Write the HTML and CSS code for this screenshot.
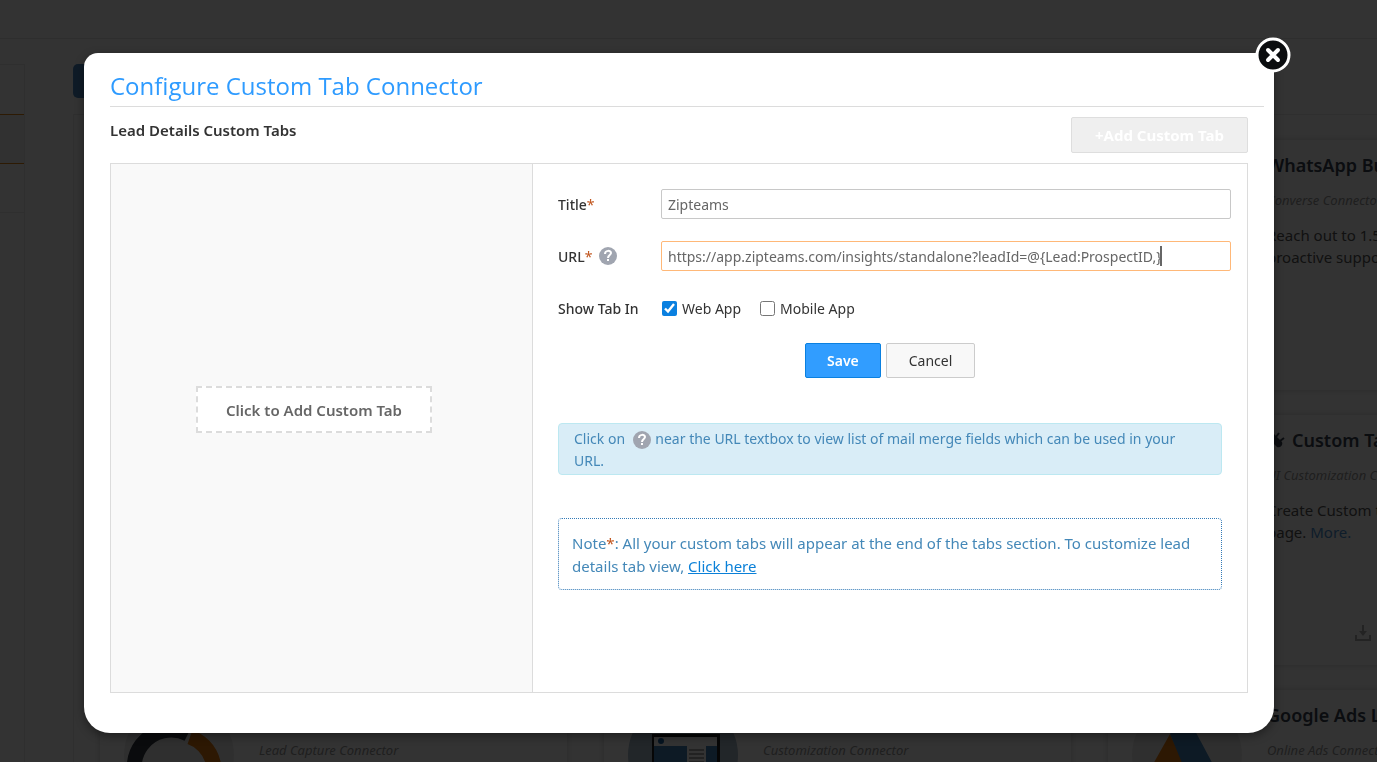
FILE: index.html
```html
<!DOCTYPE html>
<html lang="en">
<head>
    <meta charset="UTF-8" />
    <meta name="viewport" content="width=device-width, initial-scale=1.0" />
    <title>Configure Custom Tab Connector</title>
    <link rel="stylesheet" href="styles.css">
</head>
<body>

<div class="page">
    <header class="topbar"></header>
    <div class="layout">
        <nav class="sidebar">
            <div class="side-item"></div>
            <div class="side-item active"></div>
            <div class="side-item last"></div>
        </nav>
        <main class="content">
            <div class="tab-pill"></div>
            <section class="cards">
                <article class="card"></article>
                <article class="card"></article>
                <article class="card">
                    <div class="card-icon"></div>
                    <div class="card-text">
                        <h3>WhatsApp Business</h3>
                        <p class="kind">Converse Connector</p>
                        <p class="desc">Reach out to 1.5 billion users<br>proactive support.</p>
                    </div>
                </article>

                <article class="card"></article>
                <article class="card"></article>
                <article class="card">
                    <div class="card-icon"></div>
                    <div class="card-text">
                        <h3>
                            <svg class="plug" viewBox="0 0 18 18"><path d="M2 8l8 8c4 1 6-2 5-5L7 3z" fill="#38424f"/><path d="M9 6l3-4M13 10l4-3M5 13l-4 4" stroke="#38424f" stroke-width="2"/></svg>
                            Custom Tab
                        </h3>
                        <p class="kind">UI Customization Connector</p>
                        <p class="desc">Create Custom tabs on lead details<br>page. <a href="#">More.</a></p>
                        <svg class="download" viewBox="0 0 16 16"><path d="M1 10v5h14v-5M8 0v8" fill="none" stroke="#b0b0b0" stroke-width="2"/><path d="M4 6h8l-4 5z" fill="#b0b0b0"/></svg>
                    </div>
                </article>

                <article class="card">
                    <svg class="card-icon" viewBox="0 0 110 110">
                        <path d="M20 92A37 37 0 0 1 64 34" fill="none" stroke="#333a42" stroke-width="15"/>
                        <path d="M66 37A36 36 0 0 1 80 96" fill="none" stroke="#e07810" stroke-width="15"/>
                    </svg>
                    <div class="card-text">
                        <h3>Lead Capture</h3>
                        <p class="kind">Lead Capture Connector</p>
                    </div>
                </article>
                <article class="card">
                    <svg class="card-icon blue" viewBox="0 0 110 110">
                        <rect x="24" y="34" width="68" height="50" fill="#222"/>
                        <rect x="26" y="37" width="63" height="9" fill="#fff"/>
                        <circle cx="33" cy="41" r="3" fill="#1d5f9f"/>
                        <rect x="26" y="46" width="63" height="34" fill="#4080b8"/>
                        <rect x="59" y="46" width="19" height="34" fill="#fff"/>
                        <path d="M61 50h15M61 54h15M61 58h15M61 62h15" stroke="#aaa" stroke-width="2"/>
                    </svg>
                    <div class="card-text">
                        <h3>Customization</h3>
                        <p class="kind">Customization Connector</p>
                    </div>
                </article>
                <article class="card">
                    <svg class="card-icon" viewBox="0 0 110 110">
                        <path d="M38 34L20 66a15 15 0 0 0 26 15L53 66z" fill="#e07810"/>
                        <path d="M38 34L44 25h16L84 70a15 15 0 0 1-26 12z" fill="#4080b8"/>
                    </svg>
                    <div class="card-text">
                        <h3>Google Ads Lead</h3>
                        <p class="kind">Online Ads Connector</p>
                    </div>
                </article>
            </section>
        </main>
    </div>
</div>

<div class="overlay"></div>

<div class="modal" role="dialog" aria-labelledby="modalTitle">
    <button class="close" type="button" aria-label="Close">
        <svg viewBox="0 0 36 36">
            <circle cx="18" cy="18" r="16" fill="#0b0d0f" stroke="#fff" stroke-width="3"/>
            <path d="M13 13l10 10M23 13L13 23" stroke="#fff" stroke-width="4" stroke-linecap="round"/>
        </svg>
    </button>

    <h1 id="modalTitle">Configure Custom Tab Connector</h1>

    <div class="modal-body">
        <div class="toolbar">
            <h2>Lead Details Custom Tabs</h2>
            <button class="btn add" type="button" disabled>+Add Custom Tab</button>
        </div>

        <div class="panel">
            <div class="tab-list">
                <button class="add-tab" type="button">Click to Add Custom Tab</button>
            </div>

            <form class="tab-form" onsubmit="event.preventDefault();">
                <div class="row">
                    <label class="name" for="title">Title<span class="req">*</span></label>
                    <div class="field"><input type="text" id="title" value="Zipteams" /></div>
                </div>
                <div class="row">
                    <label class="name" for="url">URL<span class="req">*</span>
                        <svg class="help" viewBox="0 0 20 20"><circle cx="10" cy="10" r="9" fill="#a0a5b0"/><path d="M7 8c0-4 6-4 6-1 0 2-3 2-3 5M10 13v2" fill="none" stroke="#fff" stroke-width="2"/></svg>
                    </label>
                    <div class="field focused"><input type="text" id="url" value="https://app.zipteams.com/insights/standalone?leadId=@{Lead:ProspectID,}" /><span class="caret"></span></div>
                </div>
                <div class="row">
                    <span class="name">Show Tab In</span>
                    <div class="checks">
                        <input type="checkbox" id="web" checked /><label for="web">Web App</label>
                        <input type="checkbox" id="mobile" /><label for="mobile">Mobile App</label>
                    </div>
                </div>
                <div class="actions">
                    <button class="btn save" type="submit">Save</button>
                    <button class="btn cancel" type="button">Cancel</button>
                </div>

                <p class="info">Click on <svg class="help" viewBox="0 0 20 20"><circle cx="10" cy="10" r="9" fill="#a0a5b0"/><path d="M7 8c0-4 6-4 6-1 0 2-3 2-3 5M10 13v2" fill="none" stroke="#fff" stroke-width="2"/></svg> near the URL textbox to view list of mail merge fields which can be used in your URL.</p>

                <p class="note">Note<span class="req">*</span>: All your custom tabs will appear at the end of the tabs section. To customize lead details tab view, <a href="#">Click here</a></p>
            </form>
        </div>
    </div>
</div>

</body>
</html>
```
FILE: styles.css
```css
* { box-sizing: border-box; }
body {
    margin: 0; height: 100vh; overflow: hidden; background: #fff; color: #333;
    font-family: 'Noto Sans', 'Open Sans', sans-serif; font-size: 14px;
}
h1, h2, h3, p { margin: 0; }
button, input { font: inherit; color: inherit; }

/* page behind the dialog */
.page { height: 100vh; overflow: hidden; }
.topbar { height: 39px; border-bottom: 1px solid #e4e4e4; }
.layout { display: flex; gap: 48px; padding-top: 25px; }
.sidebar { flex: 0 0 25px; border: 1px solid #e8e8e8; border-left: 0; }
.side-item { height: 49px; }
.side-item.active {
    height: 50px; background: #f6f6f6;
    border-top: 1px solid #e08010; border-bottom: 1px solid #e08010;
}
.side-item.last { border-bottom: 1px solid #e8e8e8; }
.content { flex: 1; min-width: 0; }
.tab-pill { width: 120px; height: 34px; background: #4a88c0; border-radius: 5px; }
.cards {
    display: grid; grid-template-columns: repeat(3, 467px); gap: 25px 37px;
    margin-top: 16px; padding: 25px 26px; border: 1px solid #e8e8e8; width: 1600px;
}
.card {
    display: flex; gap: 25px; height: 250px; padding: 10px 24px;
    border-radius: 3px; box-shadow: 0 0 7px rgba(0,0,0,.18);
}
.card-icon {
    flex: 0 0 110px; height: 110px; background: #ececec; border-radius: 50%;
}
.card-icon.blue { background: #a8bccc; }
.card-text { flex: 1; display: flex; flex-direction: column; white-space: nowrap; }
.card h3 {
    display: flex; align-items: center; gap: 7px;
    font-size: 18px; line-height: 30px; font-weight: 600; color: #38424f;
}
.plug { width: 18px; height: 18px; }
.kind { margin-top: 10px; font-size: 13px; line-height: 20px; font-style: italic; color: #999; }
.desc { margin-top: 14px; font-size: 15px; line-height: 22px; color: #555; }
.desc a { color: #4a90d0; text-decoration: none; }
.download { width: 16px; height: 16px; margin: 82px 0 0 88px; }

.overlay { position: fixed; inset: 0; background: rgba(0,0,0,.8); }

/* dialog */
.modal {
    position: absolute; top: 53px; left: 84px; right: 103px;
    padding: 16px 10px 40px 26px; background: #fff;
    border-radius: 14px 14px 26px 26px;
    box-shadow: 0 3px 10px rgba(0,0,0,.4);
}
.close {
    position: absolute; top: -16px; right: -17px; width: 36px; height: 36px;
    padding: 0; border: 0; background: none; cursor: pointer;
}
.close svg { display: block; }
.modal h1 {
    padding-bottom: 3px; border-bottom: 1px solid #dcdcdc;
    font-family: 'Open Sans', sans-serif;
    font-size: 24px; line-height: 34px; font-weight: 400; color: #2e9bff;
}
.modal-body { padding: 10px 16px 0 0; }
.toolbar { display: flex; justify-content: space-between; align-items: flex-start; }
.toolbar h2 { font-size: 15px; line-height: 26px; font-weight: 600; }
.btn {
    height: 35px; padding: 0 21px; border: 1px solid #ccc; border-radius: 2px;
    font-size: 14px; cursor: pointer;
}
.btn.add {
    height: 36px; padding: 0 23px; background: #efefef; border-color: #dedede;
    color: #fff; font-size: 15px; font-weight: 700;
}
.btn.save { background: #319dff; border-color: #0a80e0; color: #fff; font-weight: 600; }
.btn.cancel { padding: 0 22px; background: #f8f8f8; }

.panel { display: flex; min-height: 530px; margin-top: 10px; border: 1px solid #dcdcdc; }
.tab-list {
    flex: 0 0 422px; padding: 222px 0 0 85px;
    background: #f9f9f9; border-right: 1px solid #dcdcdc;
}
.add-tab {
    height: 47px; padding: 0 28px; background: #fff; border: 2px dashed #dcdcdc;
    font-size: 15px; font-weight: 600; color: #666; cursor: pointer;
}
.tab-form { flex: 1; min-width: 0; padding: 25px 16px 0 25px; }
.row { display: flex; align-items: center; height: 30px; margin-bottom: 22px; }
.name { display: flex; align-items: center; flex: 0 0 103px; font-weight: 500; }
.req { color: #c0541c; font-weight: 400; }
.help { width: 20px; height: 20px; }
.name .help { margin-left: 6px; }
.field {
    flex: 1; display: flex; align-items: center; height: 30px; padding: 0 6px;
    border: 1px solid #c8c8c8; border-radius: 2px; color: #666;
}
.field input { flex: 1; min-width: 0; padding: 0; border: 0; outline: 0; background: none; }
.field.focused { border-color: #ffb878; }
.field.focused input { flex: 0 1 auto; field-sizing: content; }
.caret { width: 2px; height: 20px; margin-left: -2px; background: #666; }
.checks { display: flex; align-items: center; }
.checks input { width: 15px; height: 15px; margin: 0 5px 0 1px; accent-color: #0a80e0; }
.checks label { margin-right: 18px; }
.actions { display: flex; gap: 5px; padding-left: 247px; margin-top: -2px; }
.info {
    margin: 45px 9px 0 0; padding: 4px 15px 2px; line-height: 22px;
    background: #d9edf7; border: 1px solid #bce8f1; border-radius: 4px; color: #4488b8;
}
.info .help { vertical-align: -4px; margin: -2px 0 -2px 3px; }
.note {
    margin: 43px 9px 0 0; padding: 13px 13px 11px; font-size: 15px; line-height: 23px;
    border: 1px dotted #337ab7; border-radius: 4px; color: #4488b8;
}
.note a { color: #0a80d8; }
```
